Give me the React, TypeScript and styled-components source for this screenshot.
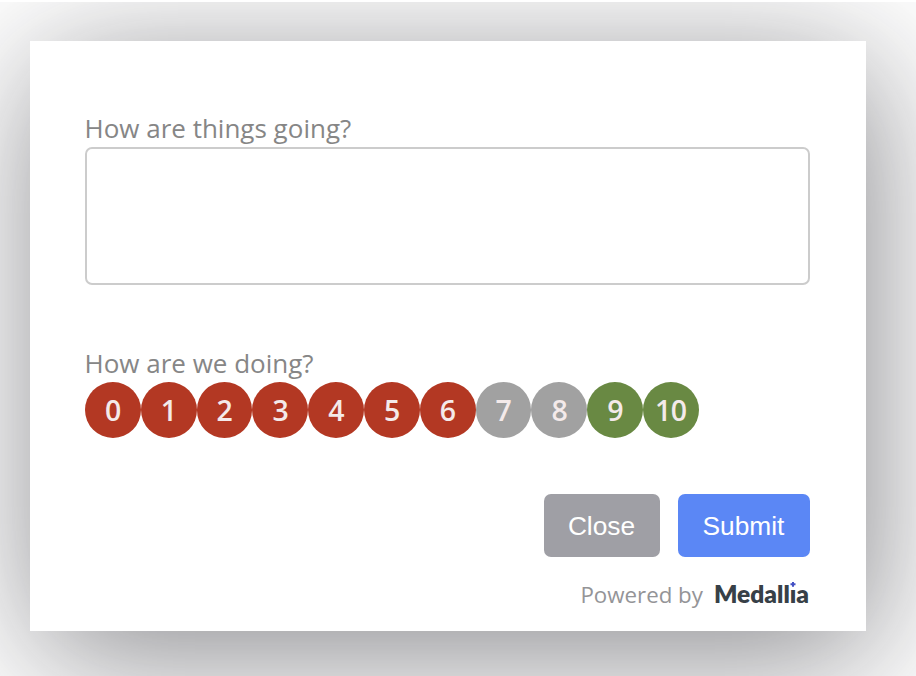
import React from "react";
import styled, { createGlobalStyle } from "styled-components";

const GlobalStyle = createGlobalStyle`
  * { box-sizing: border-box; }
  body { margin: 0; background: #fff; overflow: hidden; }
`;

const Page = styled.main`
  height: 676px;
  padding: 39px 50px 45px 29.5px;
  border-top: 2px solid #fff;
  overflow: hidden;
  font-family: "Open Sans", sans-serif;
`;

const Card = styled.form`
  height: 590px;
  padding: 71px 56px 0 55.5px;
  background: #fff;
  box-shadow: 7px 24px 130px 0 rgba(30, 30, 38, 0.53);
`;

const Label = styled.label`
  display: block;
  height: 35px;
  margin-left: -0.5px;
  line-height: 32px;
  font-size: 26px;
  color: #868686;
`;

const Answer = styled.textarea`
  display: block;
  width: 725px;
  height: 138px;
  margin-bottom: 62px;
  border: 2px solid #ccc;
  border-radius: 7px;
  background: #fff;
  resize: none;
  outline: none;
`;

const Scale = styled.div`
  display: flex;
`;

const Score = styled.button<{ $color: string }>`
  width: 55.8px;
  height: 56px;
  padding: 0;
  border: 0;
  border-radius: 50%;
  background: ${(p) => p.$color};
  color: #f4eaea;
  font: 600 28.5px/55px "Open Sans", sans-serif;
  letter-spacing: -0.5px;
`;

const Actions = styled.div`
  display: flex;
  justify-content: flex-end;
  gap: 18px;
  margin-top: 55.5px;
`;

const Action = styled.button<{ $color: string; $width: number }>`
  width: ${(p) => p.$width}px;
  height: 63.5px;
  padding: 2px 1px 0 0;
  border: 0;
  border-radius: 7px;
  background: ${(p) => p.$color};
  color: #fff;
  font: 26.3px "Liberation Sans", sans-serif;
`;

const Footer = styled.footer`
  display: flex;
  justify-content: flex-end;
  gap: 11px;
  margin-top: 20px;
  padding-right: 1px;
  line-height: 36px;
  font-size: 22.3px;
  color: #949497;
`;

const Brand = styled.span`
  margin-top: -1px;
  color: #374047;
  font: 800 24.5px/36px Lato, sans-serif;
`;

const DottedLetter = styled.span`
  position: relative;
`;

const Spark = styled.svg`
  position: absolute;
  left: 0;
  top: 2px;
  width: 6px;
  height: 9px;
`;

const scores = Array.from({ length: 11 }, (_, n) => n);
const scoreColor = (n: number) => (n < 7 ? "#b33823" : n < 9 ? "#a1a1a1" : "#698943");

export default function App() {
  return (
    <Page>
      <GlobalStyle />
      <Card>
        <Label htmlFor="answer">How are things going?</Label>
        <Answer id="answer" />
        <Label as="div">How are we doing?</Label>
        <Scale>
          {scores.map((n) => (
            <Score key={n} type="button" $color={scoreColor(n)}>{n}</Score>
          ))}
        </Scale>
        <Actions>
          <Action type="button" $color="#9f9fa5" $width={116}>Close</Action>
          <Action type="button" $color="#5b87f5" $width={132}>Submit</Action>
        </Actions>
        <Footer>
          <span>Powered by</span>
          <Brand>
            Medall
            <DottedLetter>
              i
              <Spark viewBox="0 0 6 9">
                <path d="M0 0h6v9H0z" fill="#fff" />
                <path d="M2 1h2v1.3h1.5v2H4v1.4H2V4.300H.5v-2H2z" fill="#4450c4" />
              </Spark>
            </DottedLetter>
            a
          </Brand>
        </Footer>
      </Card>
    </Page>
  );
}
